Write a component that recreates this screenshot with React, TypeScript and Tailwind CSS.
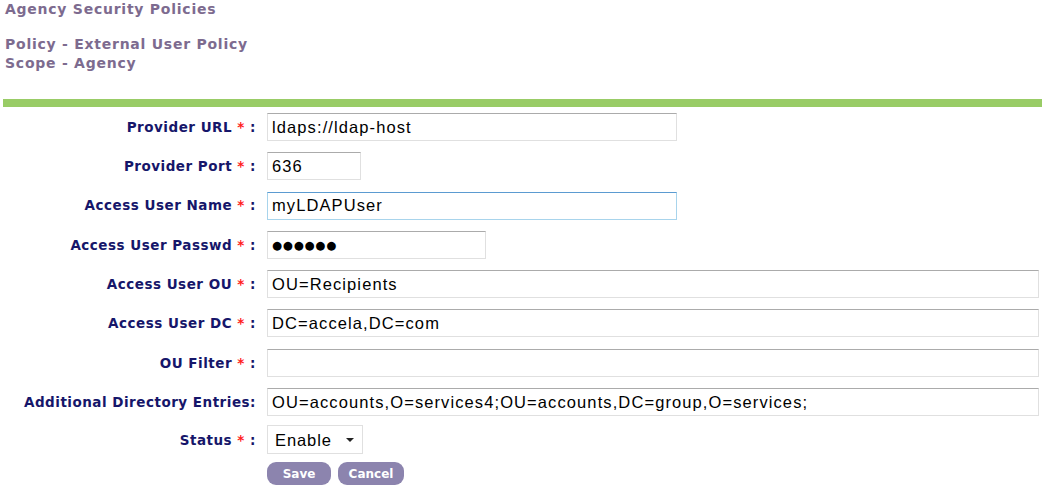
import { useState } from "react";

type Field = {
  label: string;
  value: string;
  width: string;
  required?: boolean;
  focused?: boolean;
  password?: boolean;
};

const fields: Field[] = [
  { label: "Provider URL", value: "ldaps://ldap-host", width: "w-[410px]", required: true },
  { label: "Provider Port", value: "636", width: "w-[94px]", required: true },
  { label: "Access User Name", value: "myLDAPUser", width: "w-[410px]", required: true, focused: true },
  { label: "Access User Passwd", value: "●●●●●●", width: "w-[219px]", required: true, password: true },
  { label: "Access User OU", value: "OU=Recipients", width: "w-[772px]", required: true },
  { label: "Access User DC", value: "DC=accela,DC=com", width: "w-[772px]", required: true },
  { label: "OU Filter", value: "", width: "w-[772px]", required: true },
  {
    label: "Additional Directory Entries:",
    value: "OU=accounts,O=services4;OU=accounts,DC=group,O=services;",
    width: "w-[772px]",
  },
];

function Label({ text, required }: { text: string; required?: boolean }) {
  return (
    <div className="w-[256px] shrink-0 whitespace-nowrap text-right text-[13.5px] font-bold tracking-[0.5px] text-[#16166a]">
      {text}
      {required ? (
        <>
          {" "}
          <span className="text-[#ff2020]">*</span> :
        </>
      ) : null}
    </div>
  );
}

export default function App() {
  const [values, setValues] = useState(fields.map((f) => f.value));
  const [status, setStatus] = useState("Enable");

  return (
    <div className="min-h-[487px] bg-white font-['DejaVu_Sans',Verdana,sans-serif]">
      <div className="pl-[5px] pt-[1px] text-[14px] font-bold leading-[16px] tracking-[0.75px] text-[#7d6b8f]">
        <p>Agency Security Policies</p>
        <p className="mt-[19px]">Policy - External User Policy</p>
        <p className="mt-[3px]">Scope - Agency</p>
      </div>

      <div className="mx-[3px] mt-[28px] h-[8px] bg-[#99cc66]" />

      <form className="mt-[6px] flex flex-col">
        {fields.map((f, i) => (
          <div key={f.label} className="flex h-[39.3px] items-start gap-[11px]">
            <div className="flex h-[28px] items-center">
              <Label text={f.label} required={f.required} />
            </div>
            <input
              type="text"
              readOnly={f.password}
              value={values[i]}
              onChange={(e) => {
                const next = [...values];
                next[i] = e.target.value;
                setValues(next);
              }}
              className={`${f.width} h-[28px] border px-[4px] text-black outline-none ${
                f.focused
                  ? "border-[#a8d4ec] border-t-[#5b9bd1]"
                  : "border-[#e0e0e0] border-t-[#ababab]"
              } ${
                f.password
                  ? "font-['DejaVu_Sans',sans-serif] text-[11.5px] tracking-[0.8px]"
                  : "font-['Liberation_Sans',Arial,sans-serif] text-[16.5px] tracking-[1.1px]"
              }`}
            />
          </div>
        ))}

        <div className="-mt-[2px] flex items-start gap-[11px]">
          <div className="flex h-[29px] items-center">
            <Label text="Status" required />
          </div>
          <div className="relative">
            <select
              value={status}
              onChange={(e) => setStatus(e.target.value)}
              className="h-[29px] w-[96px] appearance-none border border-[#e0e0e0] bg-white pl-[7px] font-['Liberation_Sans',Arial,sans-serif] text-[16.5px] tracking-[0.9px] text-black outline-none"
            >
              <option>Enable</option>
              <option>Disable</option>
            </select>
            <span className="pointer-events-none absolute right-[9px] top-[13px] h-0 w-0 border-x-[4px] border-t-[4px] border-x-transparent border-t-[#222]" />
          </div>
        </div>

        <div className="ml-[267px] mt-[8px] flex gap-[7px]">
          <button
            type="button"
            className="h-[23px] w-[64px] rounded-[9px] bg-[#8c84ae] text-[12px] font-bold text-white"
          >
            Save
          </button>
          <button
            type="button"
            className="h-[23px] w-[66px] rounded-[9px] bg-[#8c84ae] text-[12px] font-bold text-white"
          >
            Cancel
          </button>
        </div>
      </form>
    </div>
  );
}
